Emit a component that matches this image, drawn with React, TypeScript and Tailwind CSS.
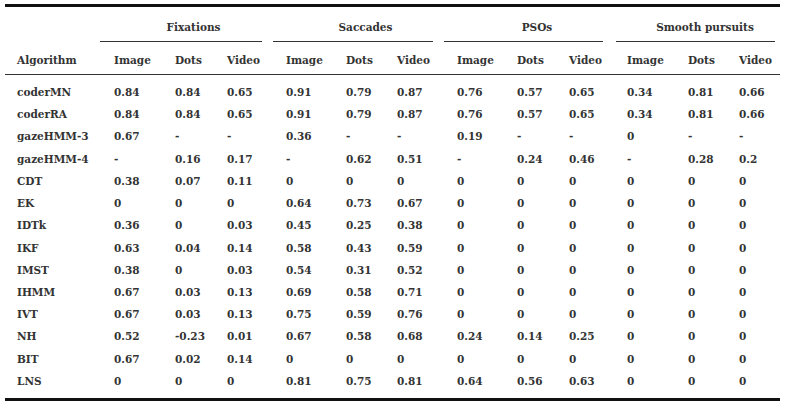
const GROUPS = [
  { label: "Fixations", mr: "mr-[11px]" },
  { label: "Saccades", mr: "mr-[11px]" },
  { label: "PSOs", mr: "mr-[13px]" },
  { label: "Smooth pursuits", mr: "mr-[5px]" },
];

// pl offsets so that each "Image" column's text starts where the reference has it
const FIRST_PAD = ["pl-[14px]", "pl-[13px]", "pl-[13px]", "pl-[11px]"];

const ROWS: [string, string[]][] = [
  ["coderMN", ["0.84", "0.84", "0.65", "0.91", "0.79", "0.87", "0.76", "0.57", "0.65", "0.34", "0.81", "0.66"]],
  ["coderRA", ["0.84", "0.84", "0.65", "0.91", "0.79", "0.87", "0.76", "0.57", "0.65", "0.34", "0.81", "0.66"]],
  ["gazeHMM-3", ["0.67", "-", "-", "0.36", "-", "-", "0.19", "-", "-", "0", "-", "-"]],
  ["gazeHMM-4", ["-", "0.16", "0.17", "-", "0.62", "0.51", "-", "0.24", "0.46", "-", "0.28", "0.2"]],
  ["CDT", ["0.38", "0.07", "0.11", "0", "0", "0", "0", "0", "0", "0", "0", "0"]],
  ["EK", ["0", "0", "0", "0.64", "0.73", "0.67", "0", "0", "0", "0", "0", "0"]],
  ["IDTk", ["0.36", "0", "0.03", "0.45", "0.25", "0.38", "0", "0", "0", "0", "0", "0"]],
  ["IKF", ["0.63", "0.04", "0.14", "0.58", "0.43", "0.59", "0", "0", "0", "0", "0", "0"]],
  ["IMST", ["0.38", "0", "0.03", "0.54", "0.31", "0.52", "0", "0", "0", "0", "0", "0"]],
  ["IHMM", ["0.67", "0.03", "0.13", "0.69", "0.58", "0.71", "0", "0", "0", "0", "0", "0"]],
  ["IVT", ["0.67", "0.03", "0.13", "0.75", "0.59", "0.76", "0", "0", "0", "0", "0", "0"]],
  ["NH", ["0.52", "-0.23", "0.01", "0.67", "0.58", "0.68", "0.24", "0.14", "0.25", "0", "0", "0"]],
  ["BIT", ["0.67", "0.02", "0.14", "0", "0", "0", "0", "0", "0", "0", "0", "0"]],
  ["LNS", ["0", "0", "0", "0.81", "0.75", "0.81", "0.64", "0.56", "0.63", "0", "0", "0"]],
];

const COLS =
  "grid grid-cols-[95px_75px_52px_46px_73px_51px_47px_73px_52px_47px_72px_51px_41px]";

function cellPad(i: number) {
  return i % 3 === 0 ? FIRST_PAD[i / 3] : "";
}

export default function App() {
  return (
    <div
      className="h-[404px] w-[789px] bg-white pt-[4px] text-[10.5px] font-bold text-[#333]"
      style={{ fontFamily: '"DejaVu Serif", serif' }}
    >
      <div className="ml-[5px] w-[775px]">
        {/* top rule */}
        <div className="h-[3px] bg-[#111]" />

        {/* group headers with cmidrules */}
        <div className={COLS}>
          <div />
          {GROUPS.map((g) => (
            <div key={g.label} className="col-span-3 flex h-[35px] flex-col">
              <div className="flex-1 pl-[14px] pt-[13px] text-center leading-[14px]">{g.label}</div>
              <div className={`h-px bg-[#333] ${g.mr}`} />
            </div>
          ))}
        </div>

        {/* column headers */}
        <div className={`${COLS} h-[32px] pt-[11px] leading-[14px]`}>
          <div className="pl-[12px]">Algorithm</div>
          {Array.from({ length: 12 }).map((_, i) => (
            <div key={i} className={cellPad(i)}>
              {["Image", "Dots", "Video"][i % 3]}
            </div>
          ))}
        </div>
        <div className="h-px bg-[#333]" />

        {/* data */}
        <div className="pt-[6px] pb-[6px]">
          {ROWS.map(([name, vals]) => (
            <div key={name} className={`${COLS} h-[22.23px] items-center leading-[22.23px]`}>
              <div className="pl-[12px]">{name}</div>
              {vals.map((v, i) => (
                <div key={i} className={cellPad(i)}>
                  {v}
                </div>
              ))}
            </div>
          ))}
        </div>

        {/* bottom rule */}
        <div className="h-[3px] bg-[#111]" />
      </div>
    </div>
  );
}
